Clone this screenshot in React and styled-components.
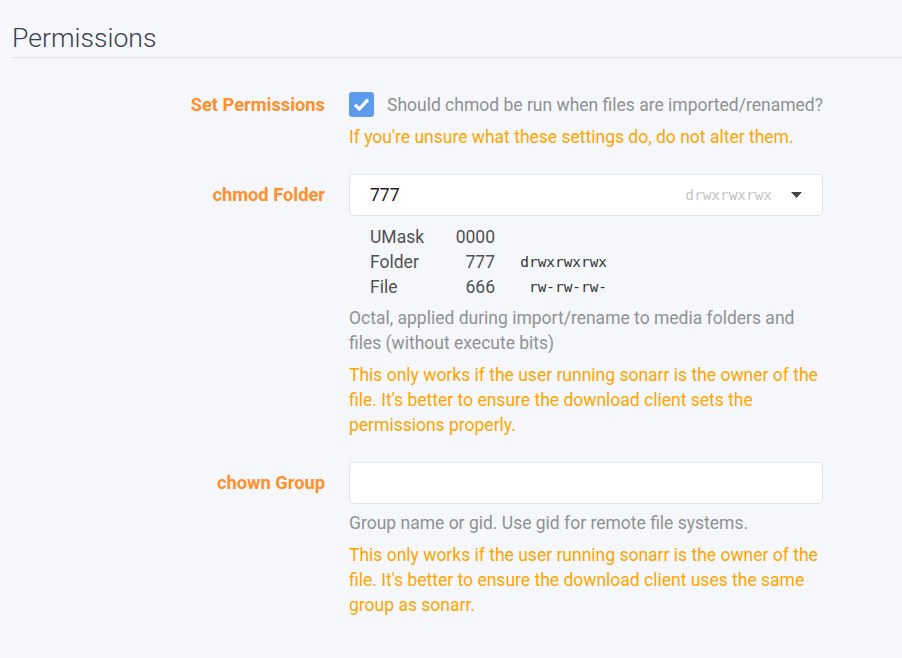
import styled, { createGlobalStyle } from 'styled-components';

const GlobalStyle = createGlobalStyle`
  html, body {
    margin: 0;
    padding: 0;
    background: #f5f7fa;
    font-family: Roboto, "Open Sans", sans-serif;
    color: #515253;
  }
`

const Page = styled.div`
  padding-left: 12px;
`

const Legend = styled.div`
  font-size: 26.6px;
  font-weight: 300;
  line-height: 30px;
  color: #3a3f51;
  padding-top: 23px;
  padding-bottom: 4px;
  border-bottom: 1px solid #e1e2e3;
  margin-bottom: 26px;
`

const Group = styled.div`
  display: grid;
  grid-template-columns: 300px 474px;
  column-gap: 24px;
  padding-left: 13px;
  margin-bottom: 24px;
  margin-top: ${p => p.mt || 0}px;
`

const Label = styled.div`
  text-align: right;
  font-weight: 700;
  font-size: 18.3px;
  line-height: 42px;
  color: #ff902b;
`

const Field = styled.div`
  display: flex;
  flex-direction: column;
`

const CheckRow = styled.label`
  display: flex;
  align-items: center;
  height: 41px;
  gap: 13px;
  font-size: 17.5px;
  color: #909293;
`

const CheckBox = styled.span`
  width: 25px;
  height: 25px;
  border-radius: 3px;
  background: #5d9cec;
  display: flex;
  align-items: center;
  justify-content: center;
`

const Help = styled.div`
  font-size: 17.5px;
  line-height: 25px;
  color: ${p => (p.warning ? '#ffa500' : '#909293')};
  margin-top: ${p => p.mt || 0}px;
`

const InputBox = styled.div`
  height: 42px;
  box-sizing: border-box;
  border: 1px solid #dde6e9;
  border-radius: 4px;
  background: #fff;
  display: flex;
  align-items: center;
  padding: 0 20px 0 20px;
  font-size: 17.5px;
  color: #222;
`

const Value = styled.span`
  flex: 1;
`

const Hint = styled.span`
  font-family: "DejaVu Sans Mono", "Liberation Mono", monospace;
  font-size: 14.4px;
  color: #c4c5c6;
  margin-right: 19px;
`

const MaskTable = styled.div`
  display: grid;
  grid-template-columns: 80px 45px 112px;
  padding-left: 21px;
  margin-top: 9px;
  font-size: 17.5px;
  line-height: 25px;
  color: #515253;
`

const MaskNum = styled.span`
  text-align: right;
`

const MaskPerm = styled.span`
  text-align: right;
  font-family: "DejaVu Sans Mono", "Liberation Mono", monospace;
  font-size: 14.4px;
  color: #333;
`

const Caret = () => (
  <svg width="11" height="6" viewBox="0 0 11 6">
    <path d="M0 0 H11 L5.5 6 Z" fill="#444" />
  </svg>
)

const umask = [
  ['UMask', '0000', ''],
  ['Folder', '777', 'drwxrwxrwx'],
  ['File', '666', 'rw-rw-rw-'],
];

const App = () => {
  return (
    <Page>
      <GlobalStyle />
      <Legend>Permissions</Legend>

      <Group>
        <Label>Set Permissions</Label>
        <Field>
          <CheckRow>
            <CheckBox>
              <svg width="19" height="19" viewBox="0 0 19 19">
                <path d="M3 9.8 L7.3 14 L16 4.6" fill="none" stroke="#fff" strokeWidth="3.2" />
              </svg>
            </CheckBox>
            Should chmod be run when files are imported/renamed?
          </CheckRow>
          <Help warning>If you're unsure what these settings do, do not alter them.</Help>
        </Field>
      </Group>

      <Group mt={2}>
        <Label>chmod Folder</Label>
        <Field>
          <InputBox>
            <Value>777</Value>
            <Hint>drwxrwxrwx</Hint>
            <Caret />
          </InputBox>
          <MaskTable>
            {umask.map(([name, num, perm]) => (
              <>
                <span key={name}>{name}</span>
                <MaskNum>{num}</MaskNum>
                <MaskPerm>{perm}</MaskPerm>
              </>
            ))}
          </MaskTable>
          <Help mt={6}>Octal, applied during import/rename to media folders and files (without execute bits)</Help>
          <Help warning mt={7}>
            This only works if the user running sonarr is the owner of the file. It's better to ensure the download client sets the permissions properly.
          </Help>
        </Field>
      </Group>

      <Group>
        <Label>chown Group</Label>
        <Field>
          <InputBox />
          <Help mt={7}>Group name or gid. Use gid for remote file systems.</Help>
          <Help warning mt={7}>
            This only works if the user running sonarr is the owner of the file. It's better to ensure the download client uses the same group as sonarr.
          </Help>
        </Field>
      </Group>
    </Page>
  );
};

export default App;
